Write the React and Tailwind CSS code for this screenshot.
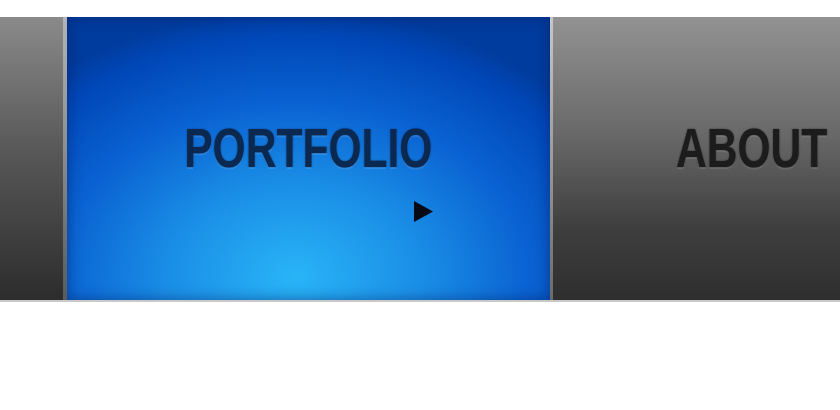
export default function App() {
  const font = { fontFamily: '"Liberation Sans", Arial, sans-serif' };
  return (
    <div className="w-[840px] h-[410px] bg-white overflow-hidden" style={font}>
      <div className="mt-[17px] h-[285px] flex border-b-2 border-[#c9c9c9]">
        <div className="w-[63px] shrink-0 h-full bg-[linear-gradient(to_bottom,#8a8a8a,#5a5a5a_45%,#2c2c2c)]" />
        <div className="w-[4px] shrink-0 h-full bg-[linear-gradient(to_bottom,#b5b5b5,#8a8a8a_50%,#5a5a5a)]" />
        <div className="relative w-[483px] shrink-0 h-full bg-[radial-gradient(ellipse_75%_95%_at_47%_92%,#29b4f7_0%,#1a8ee6_35%,#0a62d2_65%,#0047b8_90%,#003c9e_100%)] shadow-[inset_0_0_14px_rgba(0,25,90,0.5)]">
          <div className="flex justify-center pt-[103px]">
            <span className="block whitespace-nowrap text-[56px] leading-none font-bold text-[#0b2850] scale-x-[0.76] [text-shadow:0_0_2px_rgba(5,20,50,0.6),0_2px_1px_rgba(140,200,255,0.25)]">
              PORTFOLIO
            </span>
          </div>
          <svg className="absolute left-[346px] top-[183px]" width="22" height="24" viewBox="0 0 22 24">
            <path d="M1 1 L20 11.5 L1 22 Z" fill="#050a14" style={{ filter: 'blur(0.6px)' }} />
          </svg>
        </div>
        <div className="w-[3px] shrink-0 h-full bg-[linear-gradient(to_bottom,#c8c8c8,#9a9a9a_50%,#6a6a6a)]" />
        <div className="flex-1 min-w-0 overflow-hidden h-full bg-[linear-gradient(to_bottom,#929292,#6a6a6a_40%,#3e3e3e_75%,#2e2e2e)]">
          <div className="pt-[103px] pl-[123px]">
            <span className="block whitespace-nowrap origin-left text-[56px] leading-none font-bold text-[#1c1c1c] scale-x-[0.76] [text-shadow:0_0_2px_rgba(0,0,0,0.6),0_2px_1px_rgba(200,200,200,0.2)]">
              ABOUT
            </span>
          </div>
        </div>
      </div>
    </div>
  );
}
